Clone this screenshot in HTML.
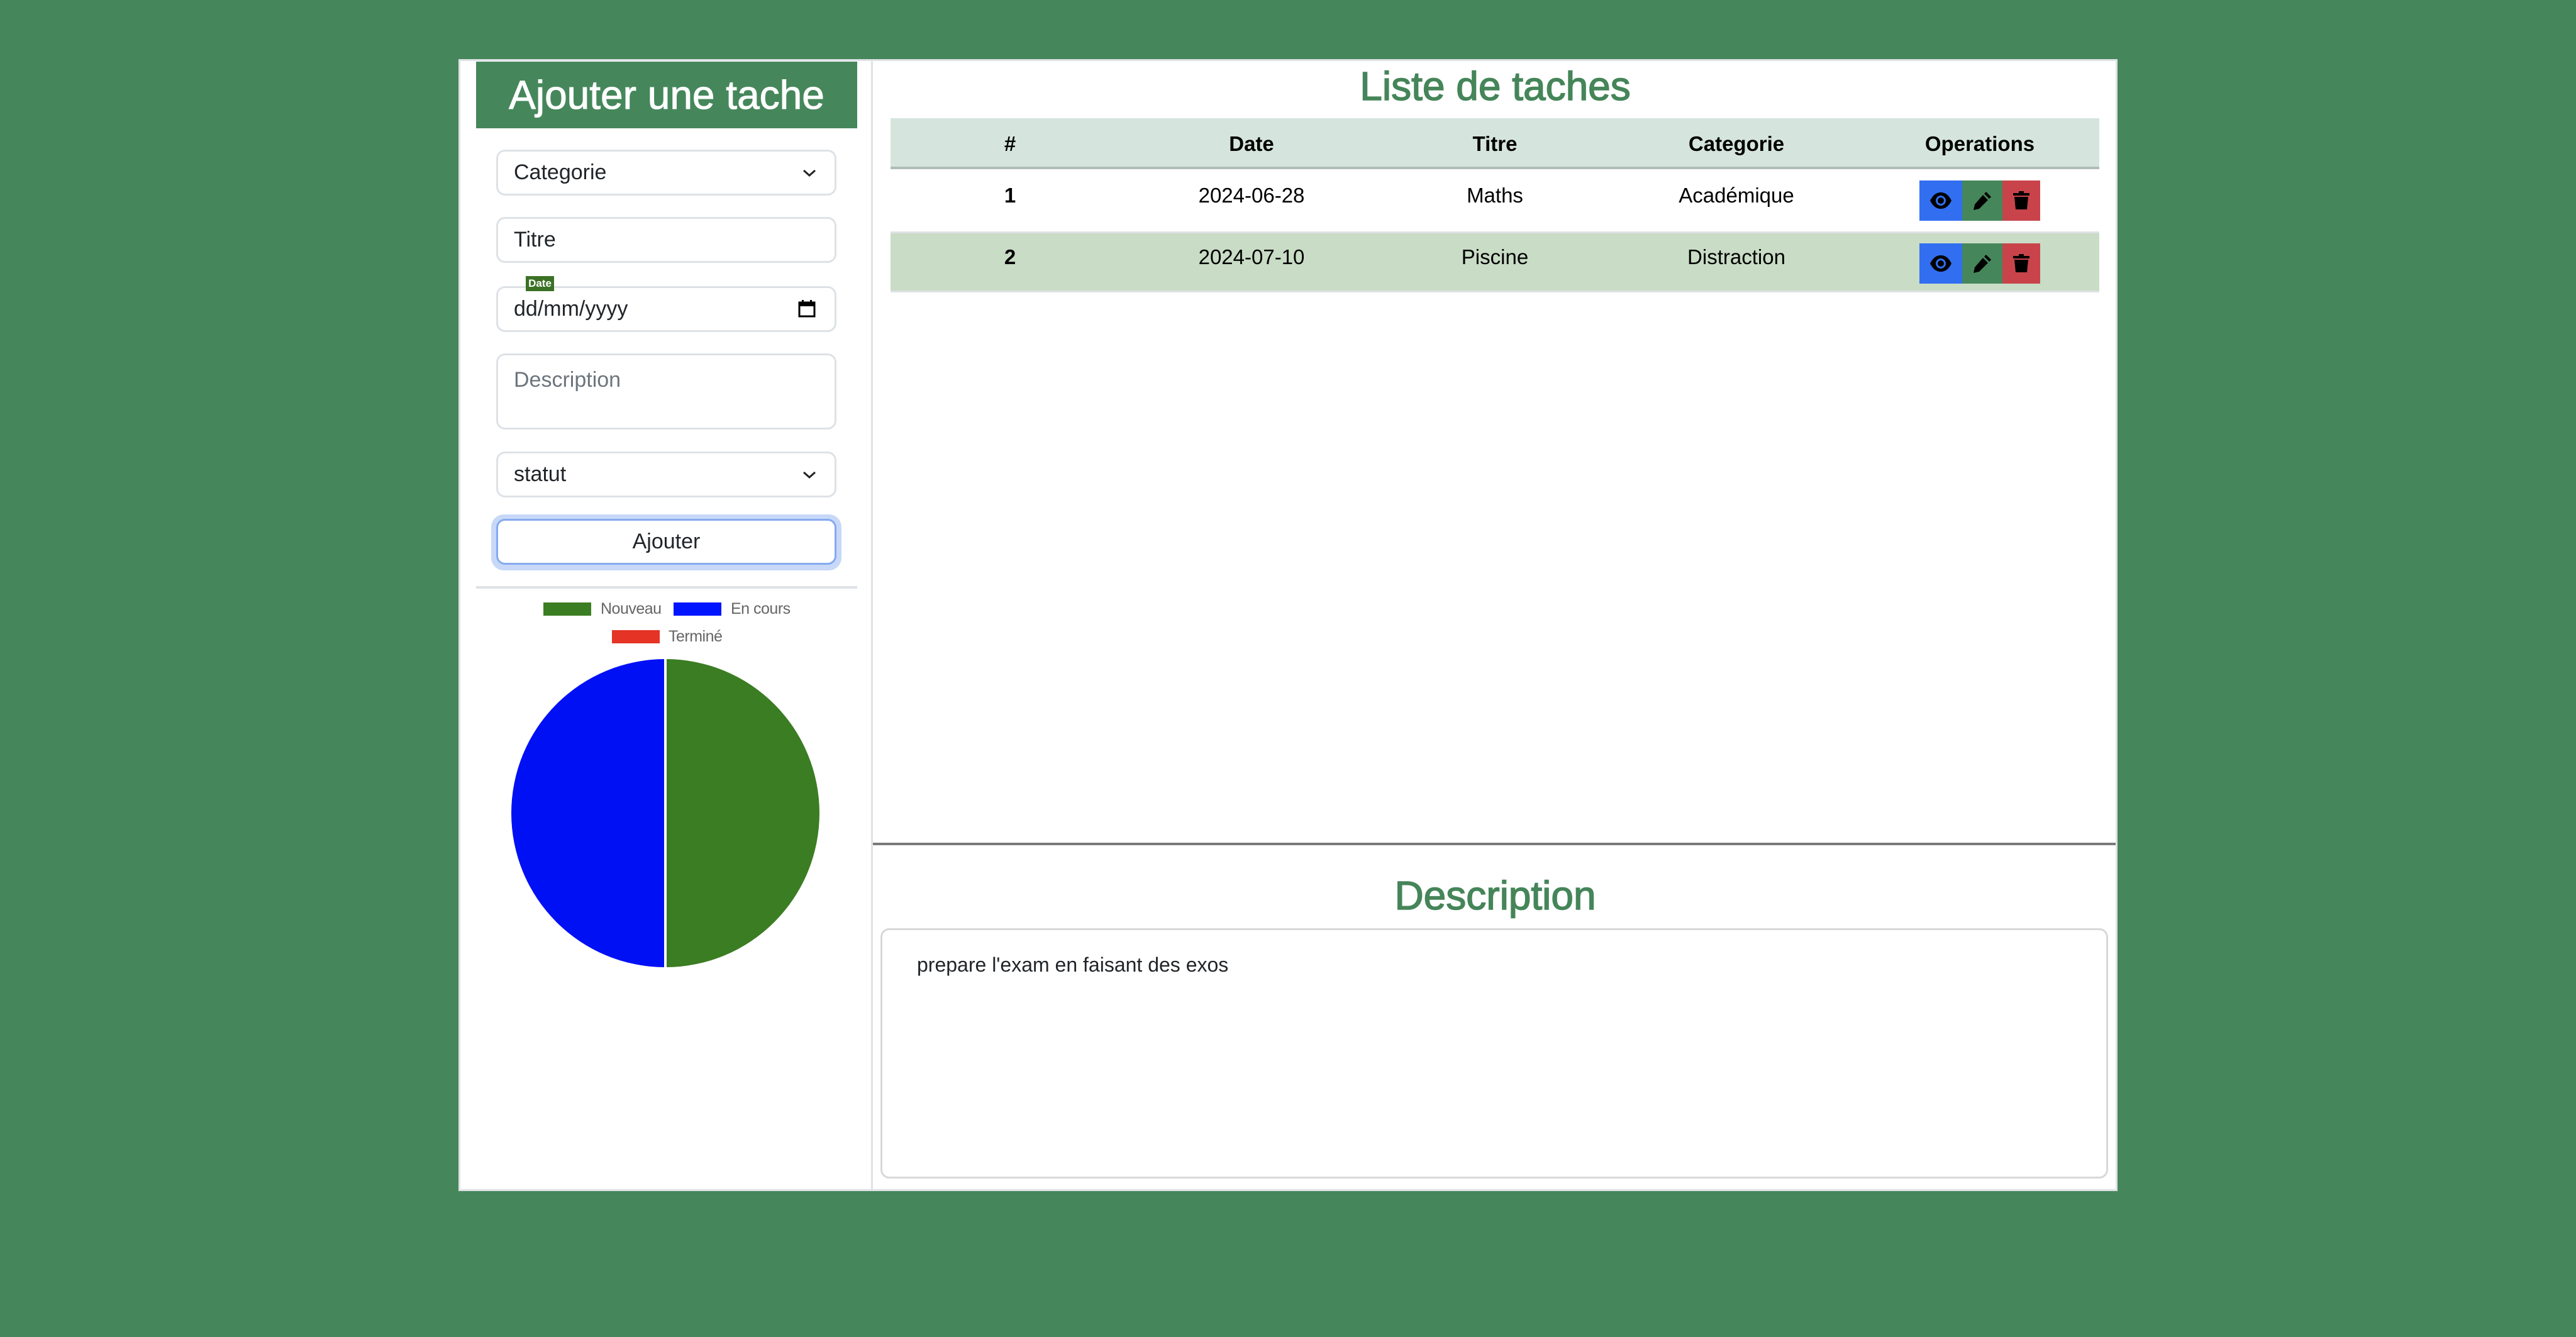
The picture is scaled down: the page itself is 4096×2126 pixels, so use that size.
<!DOCTYPE html>
<html><head><meta charset="utf-8"><style>
*{box-sizing:border-box;margin:0;padding:0}
body{width:4096px;height:2126px;background:#45875b;font-family:"Liberation Sans",sans-serif;position:relative;overflow:hidden}
.a{position:absolute}
.box{position:absolute;left:729px;top:94px;width:2638px;height:1800px;background:#fff;border:3px solid #dee2e6}
.inp{position:absolute;left:789px;width:541px;height:73px;border:3px solid #dee2e6;border-radius:14px;background:#fff;font-size:34px;color:#212529;padding-left:25px;line-height:67px}
.chev{position:absolute;right:28px;top:22px}
.th{position:absolute;top:188px;height:81px;line-height:81px;font-size:33px;font-weight:bold;text-align:center;width:300px}
.td{position:absolute;font-size:33px;text-align:center;width:300px;color:#000}
.btn{position:absolute;width:64px;height:64px}
.lg{position:absolute;font-size:25px;color:#666;letter-spacing:-0.5px}
</style></head><body>
<div class="box"></div>
<div class="a" style="left:1385px;top:94px;width:3px;height:1800px;background:#dee2e6"></div>
<!-- left -->
<div class="a" style="left:757px;top:98px;width:606px;height:106px;background:#45875b;color:#fff;font-size:64px;text-align:center;line-height:106px;-webkit-text-stroke:1px #fff">Ajouter une tache</div>
<div class="inp" style="top:238px">Categorie<svg class="chev" width="24" height="24" viewBox="0 0 24 24"><path d="M3 8l9 8 9-8" fill="none" stroke="#222" stroke-width="3"/></svg></div>
<div class="inp" style="top:345px">Titre</div>
<div class="inp" style="top:455px">dd/mm/yyyy<svg class="a" style="right:30px;top:18px" width="28" height="30" viewBox="0 0 28 30"><rect x="2" y="5" width="24" height="22" fill="none" stroke="#000" stroke-width="3"/><rect x="2" y="5" width="24" height="6" fill="#000"/><rect x="6" y="1" width="3" height="6" fill="#000"/><rect x="19" y="1" width="3" height="6" fill="#000"/></svg></div>
<div class="a" style="left:836px;top:439px;width:45px;height:24px;background:#3b7125;color:#fff;font-size:17px;font-weight:bold;line-height:24px;text-align:center">Date</div>
<div class="inp" style="top:562px;height:121px;color:#6c757d;line-height:1;padding-top:22px">Description</div>
<div class="inp" style="top:718px">statut<svg class="chev" width="24" height="24" viewBox="0 0 24 24"><path d="M3 8l9 8 9-8" fill="none" stroke="#222" stroke-width="3"/></svg></div>
<div class="a" style="left:781px;top:818px;width:557px;height:89px;border-radius:20px;background:#c7d8f8"></div>
<div class="inp" style="top:825px;border-color:#86a9ef;text-align:center;padding:0">Ajouter</div>
<div class="a" style="left:757px;top:932px;width:606px;height:4px;background:#dee2e6"></div>
<div class="a" style="left:864px;top:958px;width:76px;height:21px;background:#3b7d22"></div>
<div class="lg" style="left:955px;top:954px">Nouveau</div>
<div class="a" style="left:1071px;top:958px;width:76px;height:21px;background:#0014ff"></div>
<div class="lg" style="left:1162px;top:954px">En cours</div>
<div class="a" style="left:973px;top:1002px;width:76px;height:21px;background:#e53325"></div>
<div class="lg" style="left:1063px;top:998px">Terminé</div>
<svg class="a" style="left:811px;top:1046px" width="494" height="494" viewBox="0 0 494 494"><path d="M247 2A245 245 0 0 1 247 492Z" fill="#3b7d22"/><path d="M247 2A245 245 0 0 0 247 492Z" fill="#0010f5"/><line x1="247" y1="2" x2="247" y2="492" stroke="#fff" stroke-width="4"/></svg>
<!-- right -->
<div class="a" style="left:1388px;top:100px;width:1979px;text-align:center;font-size:64px;color:#458559;-webkit-text-stroke:1.5px #458559">Liste de taches</div>
<div class="a" style="left:1416px;top:188px;width:1922px;height:81px;background:#d5e5dd;border-bottom:4px solid #aebdb5"></div>
<div class="a" style="left:1416px;top:368px;width:1922px;height:97px;background:#c9dcc6;border-top:3px solid #dee2e6;border-bottom:3px solid #dee2e6"></div>
<div class="th" style="left:1456px">#</div><div class="th" style="left:1840px">Date</div><div class="th" style="left:2227px">Titre</div><div class="th" style="left:2611px">Categorie</div><div class="th" style="left:2998px">Operations</div>
<div class="td" style="left:1456px;top:292px;font-weight:bold">1</div><div class="td" style="left:1840px;top:292px">2024-06-28</div><div class="td" style="left:2227px;top:292px">Maths</div><div class="td" style="left:2611px;top:292px">Académique</div>
<div class="td" style="left:1456px;top:390px;font-weight:bold">2</div><div class="td" style="left:1840px;top:390px">2024-07-10</div><div class="td" style="left:2227px;top:390px">Piscine</div><div class="td" style="left:2611px;top:390px">Distraction</div>
<!-- buttons -->
<div class="a" style="left:3052px;top:287px">
<div class="btn" style="left:0;width:68px;background:#316ef0"><svg class="a" style="left:16px;top:18px" width="36" height="28" viewBox="0 0 36 28"><path d="M1 14C6 4 12 1 18 1s12 3 17 13c-5 10-11 13-17 13S6 24 1 14z" fill="#000"/><circle cx="18" cy="14" r="8" fill="#316ef0"/><circle cx="18" cy="14" r="5" fill="#000"/></svg></div>
<div class="btn" style="left:68px;background:#45875b"><svg class="a" style="left:16px;top:16px" width="32" height="32" viewBox="0 0 32 32"><path d="M22 2l8 8-3 3-8-8zM17 7l8 8L11 29 2 31l2-9z" fill="#000"/></svg></div>
<div class="btn" style="left:132px;width:60px;background:#c9444a"><svg class="a" style="left:16px;top:16px" width="28" height="32" viewBox="0 0 28 32"><path d="M10 1h8v3h9v4H1V4h9zM3 10h22l-2 20H5z" fill="#000"/></svg></div>
</div>
<div class="a" style="left:3052px;top:387px">
<div class="btn" style="left:0;width:68px;background:#316ef0"><svg class="a" style="left:16px;top:18px" width="36" height="28" viewBox="0 0 36 28"><path d="M1 14C6 4 12 1 18 1s12 3 17 13c-5 10-11 13-17 13S6 24 1 14z" fill="#000"/><circle cx="18" cy="14" r="8" fill="#316ef0"/><circle cx="18" cy="14" r="5" fill="#000"/></svg></div>
<div class="btn" style="left:68px;background:#45875b"><svg class="a" style="left:16px;top:16px" width="32" height="32" viewBox="0 0 32 32"><path d="M22 2l8 8-3 3-8-8zM17 7l8 8L11 29 2 31l2-9z" fill="#000"/></svg></div>
<div class="btn" style="left:132px;width:60px;background:#c9444a"><svg class="a" style="left:16px;top:16px" width="28" height="32" viewBox="0 0 28 32"><path d="M10 1h8v3h9v4H1V4h9zM3 10h22l-2 20H5z" fill="#000"/></svg></div>
</div>
<div class="a" style="left:1388px;top:1340px;width:1976px;height:4px;background:#7a7a7a"></div>
<div class="a" style="left:1388px;top:1387px;width:1979px;text-align:center;font-size:64px;color:#458559;-webkit-text-stroke:1.5px #458559">Description</div>
<div class="a" style="left:1400px;top:1476px;width:1952px;height:398px;border:3px solid #d8d8d8;border-radius:14px"></div>
<div class="a" style="left:1458px;top:1516px;font-size:32px;color:#212529">prepare l'exam en faisant des exos</div>
</body></html>
